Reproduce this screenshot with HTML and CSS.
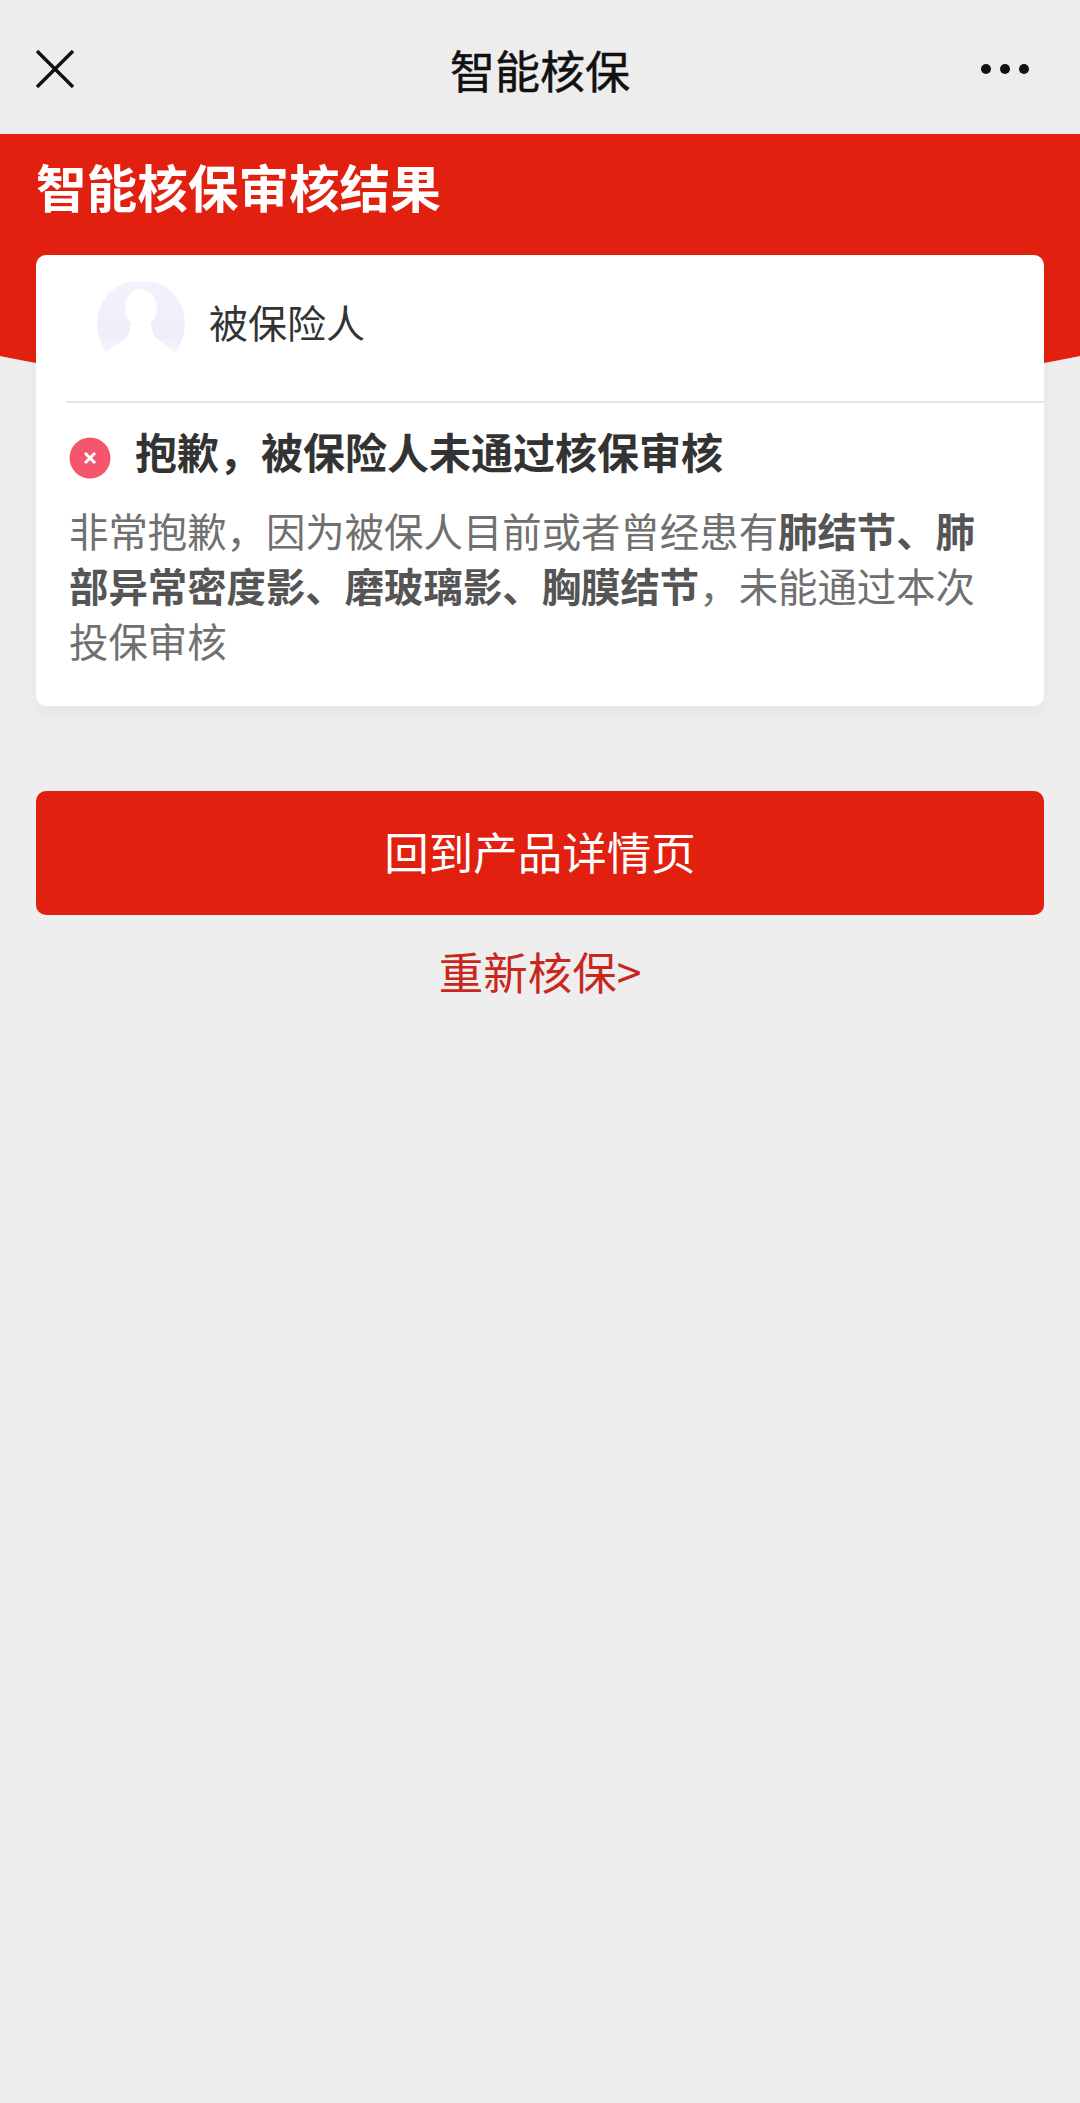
FILE: index.html
```html
<!DOCTYPE html>
<html lang="zh-CN">
<head>
  <meta charset="UTF-8">
  <meta name="viewport" content="width=device-width, initial-scale=1.0">
  <title>智能核保</title>
  <link rel="stylesheet" href="styles.css">
</head>
<body>
  <header class="nav">
    <svg class="nav__close" width="38" height="38" viewBox="0 0 38 38">
      <path d="M1 1 L37 37 M37 1 L1 37" fill="none" stroke="#111" stroke-width="3.4"/>
    </svg>
    <h1 class="nav__title">智能核保</h1>
    <div class="nav__more"><span></span><span></span><span></span></div>
  </header>

  <section class="hero">
    <h2 class="hero__title">智能核保审核结果</h2>
  </section>

  <section class="card">
    <div class="person">
      <svg class="person__avatar" width="90" height="74" viewBox="0 0 90 74">
        <defs>
          <linearGradient id="avatarFade" x1="0" y1="0" x2="0" y2="1">
            <stop offset="0" stop-color="#f3f2fc"/>
            <stop offset="0.75" stop-color="#eeeefb"/>
            <stop offset="1" stop-color="#f6f6fd"/>
          </linearGradient>
        </defs>
        <path d="M6 62 A44 44 0 1 1 84 62 L80 72 L10 72 Z" fill="url(#avatarFade)"/>
        <ellipse cx="45" cy="26" rx="16" ry="19" fill="#fff"/>
        <path d="M36 40 L54 40 L58 54 L84 74 L6 74 L32 54 Z" fill="#fff"/>
      </svg>
      <span class="person__name">被保险人</span>
    </div>
    <div class="card__line"></div>
    <div class="result">
      <svg class="result__icon" width="42" height="42" viewBox="0 0 42 42">
        <circle cx="21" cy="21" r="20.5" fill="#f4566e"/>
        <path d="M16 16 L26 26 M26 16 L16 26" fill="none" stroke="#fff" stroke-width="3"/>
      </svg>
      <h3 class="result__title">抱歉，被保险人未通过核保审核</h3>
    </div>
    <p class="card__desc">非常抱歉，因为被保人目前或者曾经患有<b>肺结节、肺部异常密度影、磨玻璃影、胸膜结节</b>，未能通过本次投保审核</p>
  </section>

  <a class="btn" href="#">回到产品详情页</a>
  <a class="retry" href="#">重新核保&gt;</a>
</body>
</html>
```

FILE: styles.css
```css
/* reset */
* {
  margin: 0;
  padding: 0;
  box-sizing: border-box;
}
a {
  text-decoration: none;
}
body {
  background-color: #eeeeee;
  font-family: "Noto Sans CJK SC", "Noto Sans", sans-serif;
  width: 1080px;
  min-height: 2103px;
  overflow: hidden;
}

/* nav */
.nav {
  display: grid;
  grid-template-columns: 1fr auto 1fr;
  align-items: center;
  height: 133px;
  padding: 5px 36px 0;
  background-color: #ededed;
}
.nav__title {
  font-size: 45px;
  font-weight: 400;
  line-height: 1;
  color: #111;
  -webkit-text-stroke: 0.5px #111;
}
.nav__more {
  display: flex;
  justify-self: end;
  gap: 9px;
  margin-right: 15px;
}
.nav__more span {
  width: 10px;
  height: 10px;
  border-radius: 50%;
  background-color: #111;
}

/* hero */
.hero {
  height: 290px;
  margin-top: 1px;
  margin-bottom: -169px;
  padding: 22px 36px 0;
  background-color: #e1200f;
  clip-path: ellipse(900px 245px at 50% 26px);
}
.hero__title {
  font-size: 50.6px;
  font-weight: 700;
  line-height: 1.2;
  color: #fff;
}

/* card */
.card {
  position: relative;
  width: 1008px;
  height: 451px;
  margin: 0 auto;
  background-color: #fff;
  border-radius: 10px;
  box-shadow: 0 8px 14px rgba(0, 0, 0, 0.04);
}
.person {
  display: flex;
  align-items: center;
  height: 146px;
  padding-left: 60px;
}
.person__avatar {
  margin-top: -2px;
  margin-bottom: 16px;
}
.person__name {
  margin-left: 23px;
  margin-bottom: 13px;
  font-size: 39px;
  line-height: 1;
  color: #333;
}
.card__line {
  height: 2px;
  margin-left: 30px;
  background-color: #e5e5e5;
}
.result {
  display: flex;
  align-items: center;
  gap: 24px;
  height: 40px;
  margin-top: 35px;
  padding-left: 33px;
}
.result__title {
  margin-top: -14px;
  font-size: 42px;
  font-weight: 700;
  line-height: 1;
  color: #333;
}
.card__desc {
  margin-top: 24px;
  padding: 0 44px 0 33px;
  font-size: 39.4px;
  line-height: 55px;
  color: #707070;
}
.card__desc b {
  color: #555;
}

/* buttons */
.btn {
  display: block;
  width: 1008px;
  height: 124px;
  margin: 85px auto 0;
  background-color: #e1200f;
  border-radius: 10px;
  font-size: 44.5px;
  line-height: 119px;
  text-align: center;
  color: #fff;
}
.retry {
  display: block;
  margin-top: 25px;
  font-size: 44.5px;
  line-height: 62px;
  text-align: center;
  color: #c9271d;
}
```
